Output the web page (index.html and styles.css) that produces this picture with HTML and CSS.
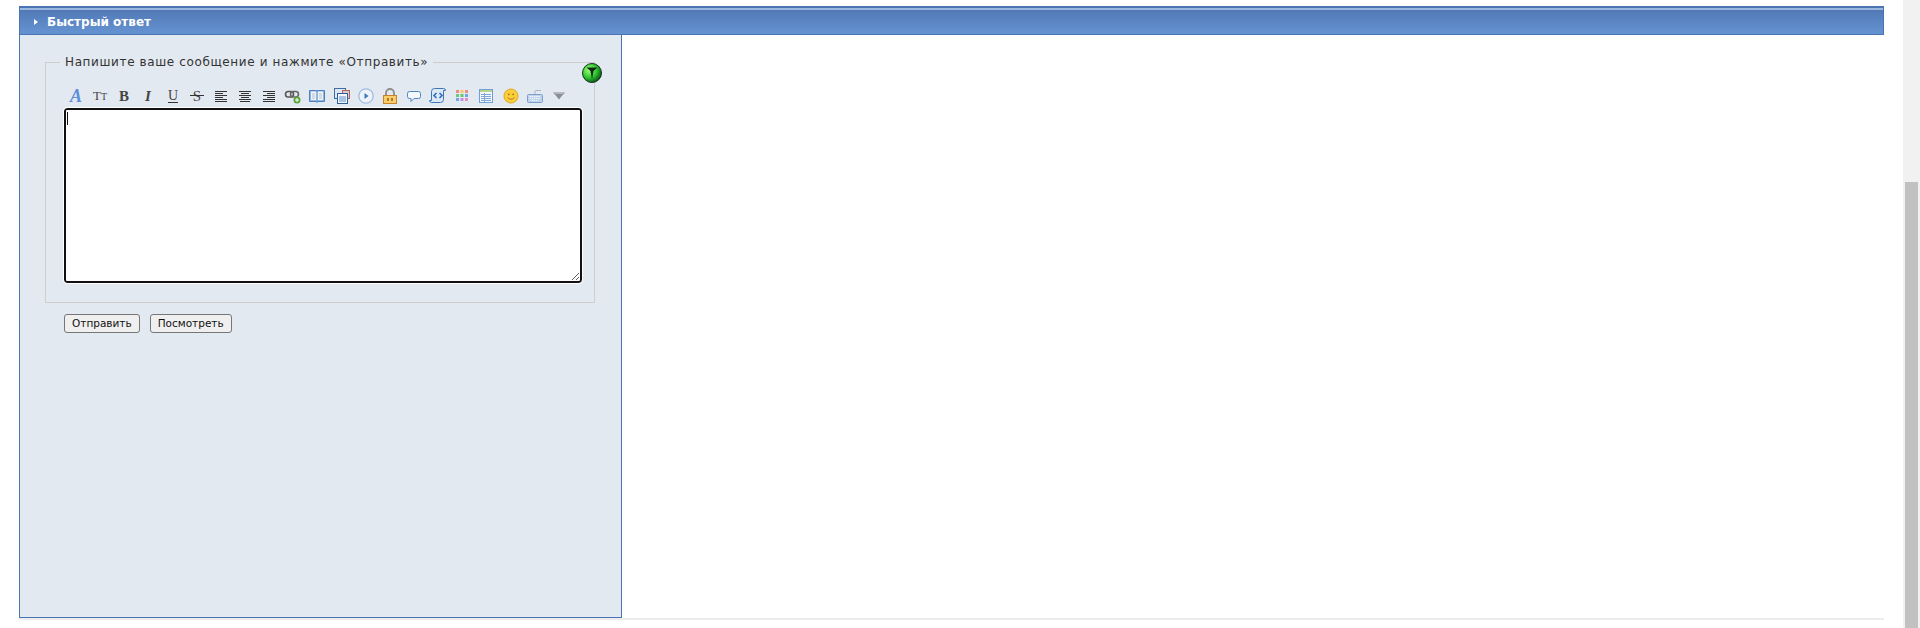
FILE: index.html
```html
<!DOCTYPE html>
<html lang="ru">
<head>
  <meta charset="utf-8">
  <title>Быстрый ответ</title>
  <link rel="stylesheet" href="styles.css">
</head>
<body>
  <div class="page">
    <div class="content">
      <div class="maintitle">
        <svg class="title-arrow" width="4" height="6" viewBox="0 0 4 6"><path d="M0 0l4 3-4 3z" fill="#fff"/></svg>
        <span>Быстрый ответ</span>
      </div>
      <form class="reply-panel">
        <fieldset class="reply-box">
          <legend>Напишите ваше сообщение и нажмите «Отправить»</legend>
          <a class="orb" href="#">
            <svg width="20" height="20" viewBox="0 0 20 20">
              <defs>
                <radialGradient id="orbfill" cx="35%" cy="35%" r="70%">
                  <stop offset="0" stop-color="#a4ff7a"/>
                  <stop offset="0.55" stop-color="#2fc92f"/>
                  <stop offset="1" stop-color="#0a5216"/>
                </radialGradient>
              </defs>
              <circle cx="10" cy="10" r="9.500" fill="url(#orbfill)" stroke="#16331c"/>
              <path d="M4.500 4.500h11l-4 3.500L10 16.500 8.500 8z" fill="#0e2a16"/>
            </svg>
          </a>
          <div class="toolbar">
            <svg class="ico" viewBox="0 0 16 16"><text x="8" y="13.500" text-anchor="middle" class="glyph glyph-a">A</text></svg>
            <svg class="ico" viewBox="0 0 16 16"><text x="1" y="12" class="glyph glyph-tt">T</text><text x="9" y="12" class="glyph glyph-t2">T</text></svg>
            <svg class="ico" viewBox="0 0 16 16"><text x="8" y="13" text-anchor="middle" class="glyph glyph-b">B</text></svg>
            <svg class="ico" viewBox="0 0 16 16"><text x="8" y="13" text-anchor="middle" class="glyph glyph-i">I</text></svg>
            <svg class="ico" viewBox="0 0 16 16"><text x="8" y="12" text-anchor="middle" class="glyph glyph-u">U</text><path d="M3 14.500h10" stroke="#333" fill="none"/></svg>
            <svg class="ico" viewBox="0 0 16 16"><text x="8" y="13" text-anchor="middle" class="glyph glyph-s">S</text><path d="M1 7.500h14" stroke="#333" fill="none"/></svg>
            <svg class="ico" viewBox="0 0 16 16"><path d="M2 3.500h12M2 5.500h8M2 7.500h12M2 9.500h8M2 11.500h12M2 13.500h12" stroke="#333" fill="none"/></svg>
            <svg class="ico" viewBox="0 0 16 16"><path d="M2 3.500h12M4 5.500h8M2 7.500h12M4 9.500h8M2 11.500h12M3 13.500h10" stroke="#333" fill="none"/></svg>
            <svg class="ico" viewBox="0 0 16 16"><path d="M2 3.500h12M6 5.500h8M2 7.500h12M6 9.500h8M2 11.500h12M2 13.500h12" stroke="#333" fill="none"/></svg>
            <svg class="ico" viewBox="0 0 16 16">
              <rect x="0.500" y="3.500" width="8" height="5.500" rx="2.700" fill="none" stroke="#555" stroke-width="1.600"/>
              <rect x="5.500" y="3.500" width="8" height="5.500" rx="2.700" fill="none" stroke="#666" stroke-width="1.600"/>
              <circle cx="12" cy="12" r="3.500" fill="#5aa83c"/><path d="M12 10v4M10 12h4" stroke="#fff"/>
            </svg>
            <svg class="ico" viewBox="0 0 16 16">
              <path d="M.5 2.500h7l.5 1 .5-1h7v11h-7l-.5 1-.5-1h-7z" fill="#8fb4de" stroke="#4f82bd"/>
              <path d="M2 3.500h5v8.500H2zM9 3.500h5v8.500H9z" fill="#eef3f9"/>
              <path d="M3 6h3M3 8h3M3 10h3M10 6h3M10 8h3M10 10h3" stroke="#b5c2d0"/>
            </svg>
            <svg class="ico" viewBox="0 0 16 16">
              <rect x="0.500" y="0.500" width="11" height="10" fill="#dfe8f2" stroke="#3f6d9e"/>
              <rect x="8.500" y="2.500" width="7" height="8" fill="#dfc9c6" stroke="#a76a6a"/>
              <rect x="3.500" y="5.500" width="10" height="10" fill="#f3f7fb" stroke="#2f5f94"/>
              <rect x="5" y="8" width="7" height="6" fill="#a8c4e4"/>
            </svg>
            <svg class="ico" viewBox="0 0 16 16">
              <circle cx="8" cy="8" r="7.200" fill="#eef3fa" stroke="#9fbde2" stroke-width="1.300"/>
              <path d="M6.500 5l4 3-4 3z" fill="#3f78bd"/>
            </svg>
            <svg class="ico" viewBox="0 0 16 16">
              <path d="M4 8V5a4 4 0 0 1 8 0v3" fill="none" stroke="#8d8d8d" stroke-width="1.800"/>
              <rect x="1.500" y="7.500" width="13" height="8" fill="#f7cf6a" stroke="#c9812a"/>
              <path d="M5 10h2v3H5zM9 10h2v3H9z" fill="#b8772a"/>
            </svg>
            <svg class="ico" viewBox="0 0 16 16">
              <path d="M3.500 3.500h9q2 0 2 2v3q0 2-2 2H8l-3 3v-3H3.500q-2 0-2-2v-3q0-2 2-2z" fill="#f3f8fd" stroke="#4f86bd"/>
            </svg>
            <svg class="ico" viewBox="0 0 16 16">
              <path d="M4.500.5h9q2 0 2 2h-2v9q0 3-3 3h-9q-2 0-2-2h2v-9q0-3 3-3z" fill="#dbe8f6" stroke="#3f76b5"/>
              <path d="M6.500 5L4 7.500 6.500 10M9.500 5L12 7.500 9.500 10" fill="none" stroke="#2f6cc0" stroke-width="1.600"/>
            </svg>
            <svg class="ico" viewBox="0 0 16 16">
              <rect x="2" y="2" width="3" height="3" fill="#f08d7f"/><rect x="6.500" y="2" width="3" height="3" fill="#f5c96a"/><rect x="11" y="2" width="3" height="3" fill="#f08d7f"/>
              <rect x="2" y="6" width="3" height="3" fill="#6fc77a"/><rect x="6.500" y="6" width="3" height="3" fill="#66c96e"/><rect x="11" y="6" width="3" height="3" fill="#6fa6e6"/>
              <rect x="2" y="10" width="3" height="3" fill="#6fa6e6"/><rect x="6.500" y="10" width="3" height="3" fill="#c98fdc"/><rect x="11" y="10" width="3" height="3" fill="#e58fc8"/>
            </svg>
            <svg class="ico" viewBox="0 0 16 16">
              <rect x="1.500" y="1.500" width="13" height="13" fill="#f4f8fc" stroke="#6f9fd6"/>
              <path d="M2 2h12v2H2z" fill="#b7d48f"/>
              <path d="M3 6.500h10M3 8.500h10M3 10.500h10M3 12.500h10M6.500 5v9" stroke="#7fa6d4" fill="none"/>
            </svg>
            <svg class="ico" viewBox="0 0 16 16">
              <circle cx="8" cy="8" r="7" fill="#f9d03c" stroke="#e2a520"/>
              <circle cx="5.800" cy="6.300" r="0.900" fill="#a56a10"/><circle cx="10.200" cy="6.300" r="0.900" fill="#a56a10"/>
              <path d="M4.500 9.500q3.500 3.500 7 0" fill="none" stroke="#b97a14"/>
            </svg>
            <svg class="ico" viewBox="0 0 16 16">
              <path d="M8 6V3.500q0-1 1-1h5" fill="none" stroke="#aab4c0"/>
              <rect x="0.500" y="6.500" width="15" height="8" rx="1" fill="#bfd3ec" stroke="#7d9fc9"/>
              <path d="M2.500 8.500h11M2.500 10.500h11M4.500 12.500h7" stroke="#f7fafd" stroke-dasharray="1.500 .7" fill="none"/>
            </svg>
            <svg class="ico" viewBox="0 0 16 16"><path d="M2 4.500h12q-3 3-6 7q-3-4-6-7z" fill="#8a8f96"/><path d="M4 5.500h8" stroke="#b5b9be"/></svg>
          </div>
          <div class="editor">
            <textarea class="editor-area" rows="8" cols="60"></textarea>
            <span class="caret"></span>
          </div>
        </fieldset>
        <div class="actions">
          <button type="button" class="btn btn-send">Отправить</button>
          <button type="button" class="btn btn-preview">Посмотреть</button>
        </div>
      </form>
      <div class="foot-line"></div>
    </div>
    <div class="scrollbar"><div class="scrollbar-thumb"></div></div>
  </div>
</body>
</html>
```

FILE: styles.css
```css
html, body {
  height: 100%;
  margin: 0;
  background-color: #fff;
  overflow: hidden;
}
body {
  font-family: "DejaVu Sans", Verdana, sans-serif;
  font-size: 11px;
  color: #333;
}
.page {
  display: flex;
  height: 628px;
}
.content {
  flex: 1;
  padding: 6px 19px 0 19px;
}
.scrollbar {
  width: 17px;
  background-color: #f1f1f1;
  padding-top: 182px;
  box-sizing: border-box;
}
.scrollbar-thumb {
  height: 446px;
  margin: 0 2px;
  background-color: #c1c1c1;
}

/* title bar */
.maintitle {
  display: flex;
  align-items: center;
  height: 29px;
  padding: 2px 0 0 14px;
  border: 1px solid #4a74b2;
  border-top: 2px solid #4a74b2;
  box-shadow: inset 0 2px 0 #9db8de;
  background: linear-gradient(#5077b4, #6593d2);
  color: #fff;
  font-weight: bold;
  font-size: 12px;
  box-sizing: border-box;
}
.title-arrow {
  margin-right: 9px;
}

/* reply panel */
.reply-panel {
  width: 603px;
  height: 583px;
  padding: 20px 25px 0 25px;
  margin: 0;
  border: 1px solid #4a74b2;
  border-top: 0;
  background-color: #e3e9f1;
  box-sizing: border-box;
}
.reply-box {
  position: relative;
  margin: 0;
  padding: 19px 0 14px 18px;
  width: 550px;
  height: 248px;
  border: 1px solid #cdcdcd;
  box-sizing: border-box;
}
.reply-box legend {
  margin-left: -4px;
  padding: 0 5px;
  font-size: 12px;
  letter-spacing: 0.62px;
  color: #333;
}
.orb {
  position: absolute;
  top: -6px;
  right: -8px;
  display: block;
  width: 20px;
  height: 20px;
}
.toolbar {
  display: flex;
  gap: 8.150px;
  padding-left: 4px;
  height: 16px;
  margin-bottom: 4px;
}
.ico {
  width: 16px;
  height: 16px;
  flex: none;
  overflow: visible;
}
.glyph {
  font-family: "Liberation Serif", serif;
  font-weight: bold;
  fill: #444;
}
.glyph-a {
  font-size: 18px;
  font-style: italic;
  fill: #5f8edb;
}
.glyph-tt {
  font-size: 13px;
  font-weight: normal;
}
.glyph-t2 {
  font-size: 10px;
  font-weight: normal;
}
.glyph-b {
  font-size: 15px;
}
.glyph-i {
  font-size: 15px;
  font-style: italic;
}
.glyph-u {
  font-size: 14px;
  font-weight: normal;
}
.glyph-s {
  font-size: 15px;
  font-weight: normal;
}
.editor {
  position: relative;
  width: 518px;
  height: 175px;
}
.editor-area {
  display: block;
  width: 100%;
  height: 100%;
  margin: 0;
  padding: 2px;
  border: 2px solid #111;
  border-radius: 3px;
  outline: 1px solid #fff;
  background-color: #fff;
  box-sizing: border-box;
  font-family: "DejaVu Sans", sans-serif;
  font-size: 12px;
}
.caret {
  position: absolute;
  left: 3px;
  top: 4px;
  width: 1px;
  height: 13px;
  background-color: #111;
}

.actions {
  display: flex;
  gap: 10px;
  padding: 11px 0 0 19px;
}
.btn {
  height: 19px;
  padding: 0 7px;
  border: 1px solid #767676;
  border-radius: 3px;
  background-color: #efefef;
  color: #111;
  font-family: "DejaVu Sans", sans-serif;
  font-size: 10.500px;
  line-height: 1;
}
.foot-line {
  height: 2px;
  background-color: #ededed;
}
```
